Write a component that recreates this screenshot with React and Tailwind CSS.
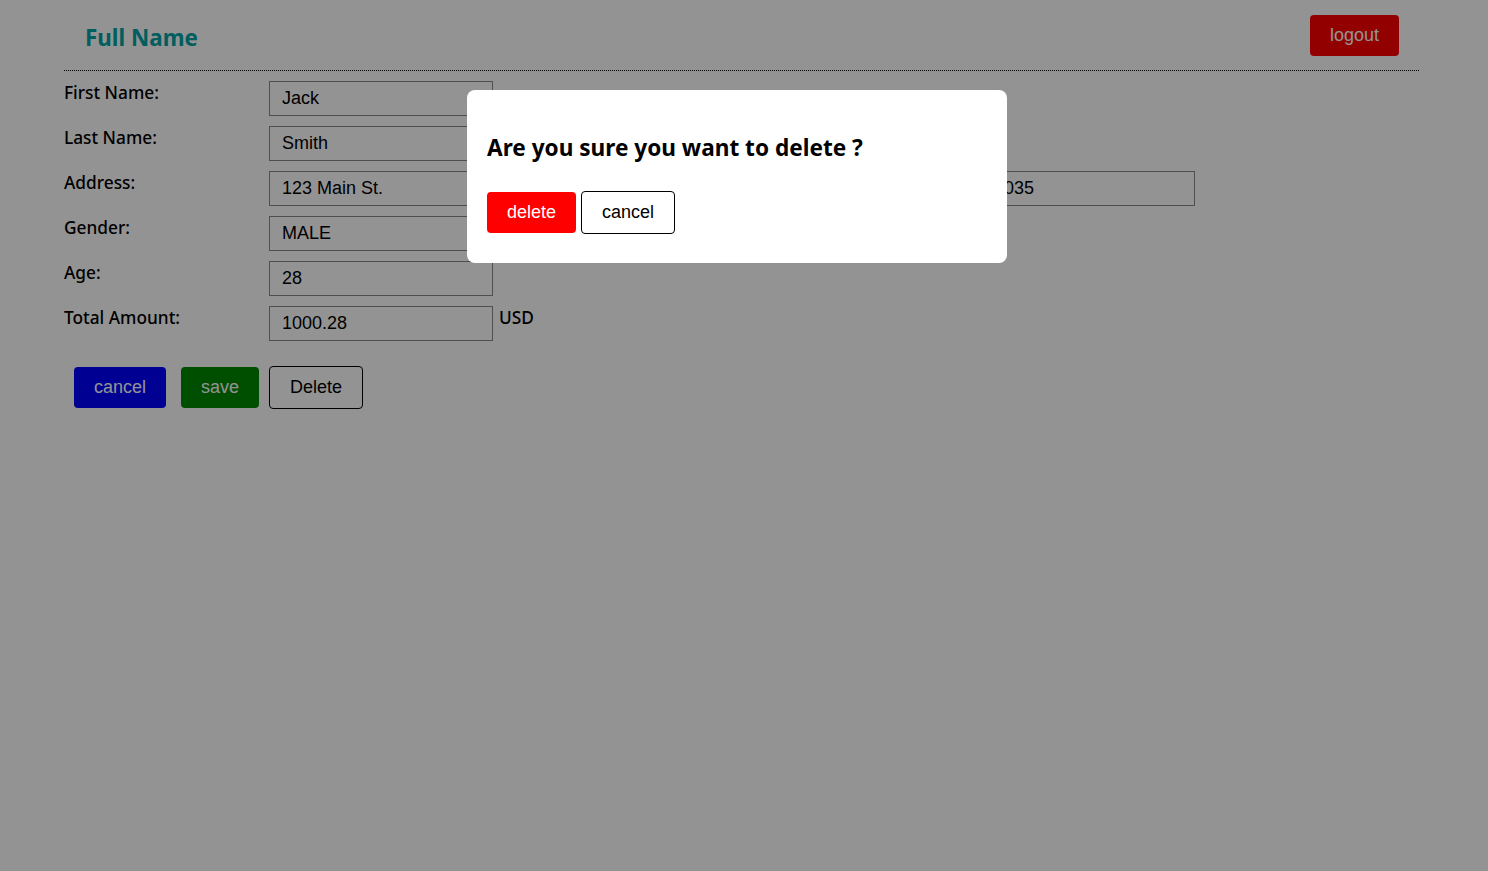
import React from 'react';

const rows = [
  { label: 'First Name:', value: 'Jack' },
  { label: 'Last Name:', value: 'Smith' },
  { label: 'Address:', value: '123 Main St.', extra: ['New York', 'NY', '10035'] },
  { label: 'Gender:', value: 'MALE' },
  { label: 'Age:', value: '28' },
  { label: 'Total Amount:', value: '1000.28', suffix: 'USD' },
];

const Field = ({ value }) => (
  <input
    readOnly
    value={value}
    className="w-[224px] h-[35px] border border-[#8a8a8a] bg-white px-3 text-[18px] text-black font-['Liberation_Sans',Arial,sans-serif] outline-none"
  />
);

export default function App() {
  return (
    <div className="relative min-h-[871px] bg-white font-['Noto_Sans',sans-serif]">
      <div className="ml-[64px] w-[1355px]">
        <div className="flex items-center justify-between h-[71px] border-b border-dotted border-black">
          <h1 className="ml-[21px] mt-[5px] text-[22.4px] font-bold text-[#00a3a3]">Full Name</h1>
          <button className="mr-[20px] mt-[1px] w-[89px] h-[41px] rounded bg-[#ff0000] text-white text-[18px] font-['Liberation_Sans',Arial,sans-serif]">
            logout
          </button>
        </div>

        <div className="pt-[10px] flex flex-col gap-[10px]">
          {rows.map((r) => (
            <div key={r.label} className="flex items-start h-[35px]">
              <label className="w-[205px] text-[17.3px] font-medium text-black leading-[24px]">{r.label}</label>
              <div className="flex gap-[10px] items-start">
                <Field value={r.value} />
                {r.extra && r.extra.map((v) => <Field key={v} value={v} />)}
              </div>
              {r.suffix && <span className="ml-[6px] text-[17.3px] font-medium leading-[24px] text-black">{r.suffix}</span>}
            </div>
          ))}
        </div>

        <div className="mt-[25px] ml-[10px] flex items-center gap-[15px] font-['Liberation_Sans',Arial,sans-serif] text-[18px]">
          <button className="w-[92px] h-[41px] rounded bg-[#0000ff] text-white">cancel</button>
          <button className="w-[78px] h-[41px] rounded bg-[#008800] text-white">save</button>
          <button className="-ml-[5px] w-[94px] h-[43px] rounded border border-black bg-white text-black">Delete</button>
        </div>
      </div>

      {/* overlay */}
      <div className="absolute inset-0 bg-black/[0.423]">
        <div className="absolute left-[467px] top-[90px] w-[540px] h-[173px] rounded-lg bg-white px-5">
          <h2 className="mt-[45px] text-[22.6px] font-bold leading-[26px] text-black">Are you sure you want to delete ?</h2>
          <div className="mt-[30px] flex items-center gap-[5px] font-['Liberation_Sans',Arial,sans-serif] text-[18px]">
            <button className="w-[89px] h-[41px] rounded bg-[#ff0000] text-white">delete</button>
            <button className="w-[94px] h-[43px] rounded border border-black bg-white text-black">cancel</button>
          </div>
        </div>
      </div>
    </div>
  );
}
